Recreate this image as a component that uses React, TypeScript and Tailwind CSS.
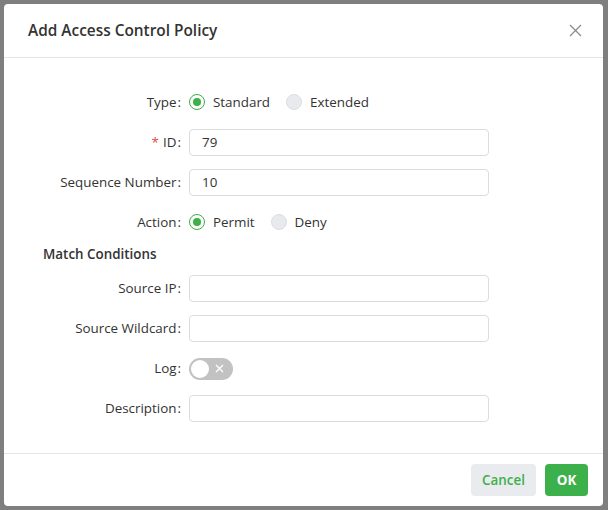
import React from "react";

const font = { fontFamily: '"Open Sans", "Noto Sans", sans-serif' };

function Label({ text, required }: { text: string; required?: boolean }) {
  return (
    <div className="w-[157px] shrink-0 flex items-center justify-end text-[13.4px] text-[#333333] mr-[8px]">
      {required && <span className="text-[#e5484d] mr-[4px]">*</span>}
      <span>{text}</span>
      <span className="ml-[1px]">:</span>
    </div>
  );
}

function Radio({ checked, label }: { checked?: boolean; label: string }) {
  return (
    <div className="flex items-center mr-[16px]">
      {checked ? (
        <span className="w-[16px] h-[16px] rounded-full border border-[#3cb04a] flex items-center justify-center bg-white">
          <span className="w-[8px] h-[8px] rounded-full bg-[#3cb04a]" />
        </span>
      ) : (
        <span className="w-[16px] h-[16px] rounded-full border border-[#dcdde1] bg-[#e9eaee]" />
      )}
      <span className="ml-[8px] text-[13.4px] text-[#333333]">{label}</span>
    </div>
  );
}

function Input({ value }: { value?: string }) {
  return (
    <div className="w-[300px] h-[27px] border border-[#dcdcdc] rounded-[4px] bg-white flex items-center pl-[12px] text-[13.4px] text-[#333333]">
      {value}
    </div>
  );
}

function Row({ children, mb = "mb-[13px]" }: { children: React.ReactNode; mb?: string }) {
  return <div className={`flex items-center h-[27px] ${mb}`}>{children}</div>;
}

export default function App() {
  return (
    <div className="w-[608px] h-[510px] bg-[#7f7f7f] pt-[4px] pl-[4px] overflow-hidden" style={font}>
      <div className="w-[599px] h-[502px] bg-white rounded-[4px] flex flex-col">
        <div className="h-[54px] flex items-center justify-between pl-[24px] pr-[21px] border-b border-[#e5e5e5]">
          <span className="text-[15.4px] font-semibold text-[#333333]">Add Access Control Policy</span>
          <svg width="13" height="13" viewBox="0 0 13 13">
            <path d="M1 1 L12 12 M12 1 L1 12" stroke="#8c8c8c" strokeWidth="1.3" />
          </svg>
        </div>
        <div className="flex-1 pt-[31px] pl-[20px]">
          <Row>
            <Label text="Type" />
            <Radio checked label="Standard" />
            <Radio label="Extended" />
          </Row>
          <Row>
            <Label text="ID" required />
            <Input value="79" />
          </Row>
          <Row>
            <Label text="Sequence Number" />
            <Input value="10" />
          </Row>
          <Row mb="mb-[8px]">
            <Label text="Action" />
            <Radio checked label="Permit" />
            <Radio label="Deny" />
          </Row>
          <div className="pl-[19px] h-[20px] flex items-center text-[13.4px] font-semibold text-[#333333] mb-[11px]">
            Match Conditions
          </div>
          <Row>
            <Label text="Source IP" />
            <Input />
          </Row>
          <Row>
            <Label text="Source Wildcard" />
            <Input />
          </Row>
          <Row>
            <Label text="Log" />
            <div className="w-[44px] h-[22px] rounded-full bg-[#c2c2c2] flex items-center pl-[2px]">
              <span className="w-[18px] h-[18px] rounded-full bg-white" />
              <svg className="ml-[6px]" width="9" height="9" viewBox="0 0 9 9">
                <path d="M1 1 L8 8 M8 1 L1 8" stroke="#ffffff" strokeWidth="1.3" />
              </svg>
            </div>
          </Row>
          <Row>
            <Label text="Description" />
            <Input />
          </Row>
        </div>
        <div className="h-[53px] border-t border-[#e5e5e5] flex items-start justify-end pt-[10px] pr-[15px] gap-[9px]">
          <button className="w-[65px] h-[32px] rounded-[4px] bg-[#eaebee] text-[#3cb04a] text-[13.4px] font-semibold">
            Cancel
          </button>
          <button className="w-[43px] h-[32px] rounded-[4px] bg-[#3cb04a] text-white text-[13.4px] font-bold">
            OK
          </button>
        </div>
      </div>
    </div>
  );
}
